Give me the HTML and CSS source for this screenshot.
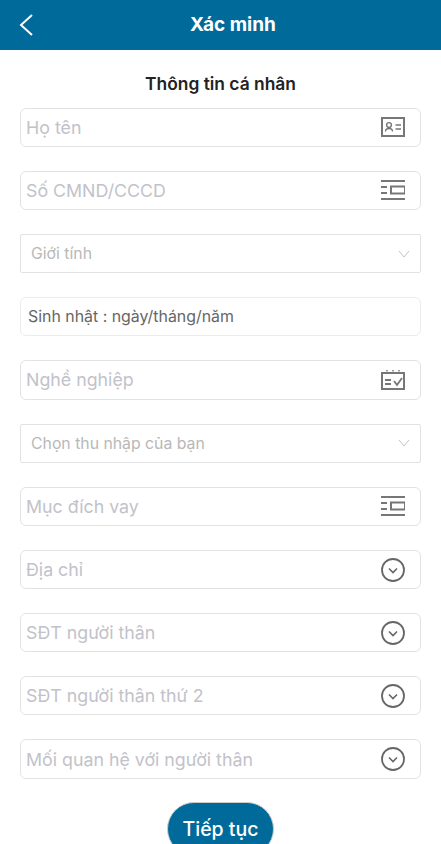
FILE: index.html
```html
<!DOCTYPE html>
<html lang="vi">
<head>
<meta charset="UTF-8">
<meta name="viewport" content="width=device-width, initial-scale=1.0">
<title>Xác minh</title>
<link rel="stylesheet" href="styles.css">
</head>
<body>
<div class="header">
    <a class="back" href="#">
        <svg width="16" height="24" viewBox="0 0 16 24"><path d="M14 2 L3 12 L14 22" fill="none" stroke="#fff" stroke-width="2"/></svg>
    </a>
    <h1>Xác minh</h1>
</div>
<form class="container">
    <h2>Thông tin cá nhân</h2>

    <div class="field">
        <input type="text" placeholder="Họ tên">
        <svg class="icon" width="24" height="20" viewBox="0 0 24 20">
            <rect x="1" y="1" width="22" height="18" fill="none" stroke="#777" stroke-width="2"/>
            <circle cx="8" cy="8" r="2.4" fill="none" stroke="#777" stroke-width="1.4"/>
            <path d="M4.5 14.5 C4.5 10.5 11.5 10.5 11.5 14.5 M14.5 8 H20 M14.5 12 H20" fill="none" stroke="#777" stroke-width="1.4"/>
        </svg>
    </div>

    <div class="field">
        <input type="text" placeholder="Số CMND/CCCD">
        <svg class="icon" width="24" height="20" viewBox="0 0 24 20">
            <path d="M0 1 H24 M0 19 H24 M0 7 H6 M0 13 H6" fill="none" stroke="#777" stroke-width="2"/>
            <rect x="10" y="6.5" width="14" height="7" fill="none" stroke="#777" stroke-width="2"/>
        </svg>
    </div>

    <div class="field picker">
        <span>Giới tính</span>
        <svg class="arrow" width="12" height="8" viewBox="0 0 12 8"><path d="M1 1 L6 7 L11 1" fill="none" stroke="#c4c4c4"/></svg>
    </div>

    <div class="field birthday">
        <span>Sinh nhật : ngày/tháng/năm</span>
    </div>

    <div class="field">
        <input type="text" placeholder="Nghề nghiệp">
        <svg class="icon" width="24" height="20" viewBox="0 0 24 20">
            <path d="M1 3 H23 V19 H1 Z" fill="none" stroke="#777" stroke-width="2"/>
            <path d="M6 0 V5 M12 0 V5 M18 0 V5" fill="none" stroke="#777" stroke-width="1.4" stroke-dasharray="1.5 1"/>
            <path d="M4 10 H10 M4 14 H10 M13 11 L16 15 L21 8" fill="none" stroke="#777" stroke-width="1.8"/>
        </svg>
    </div>

    <div class="field picker">
        <span>Chọn thu nhập của bạn</span>
        <svg class="arrow" width="12" height="8" viewBox="0 0 12 8"><path d="M1 1 L6 7 L11 1" fill="none" stroke="#c4c4c4"/></svg>
    </div>

    <div class="field">
        <input type="text" placeholder="Mục đích vay">
        <svg class="icon" width="24" height="20" viewBox="0 0 24 20">
            <path d="M0 1 H24 M0 19 H24 M0 7 H6 M0 13 H6" fill="none" stroke="#777" stroke-width="2"/>
            <rect x="10" y="6.5" width="14" height="7" fill="none" stroke="#777" stroke-width="2"/>
        </svg>
    </div>

    <div class="field">
        <input type="text" placeholder="Địa chỉ">
        <svg class="icon" width="24" height="24" viewBox="0 0 24 24">
            <circle cx="12" cy="12" r="11" fill="none" stroke="#666" stroke-width="1.8"/>
            <path d="M8 10.5 L12 14.5 L16 10.5" fill="none" stroke="#666" stroke-width="1.6"/>
        </svg>
    </div>

    <div class="field">
        <input type="text" placeholder="SĐT người thân">
        <svg class="icon" width="24" height="24" viewBox="0 0 24 24">
            <circle cx="12" cy="12" r="11" fill="none" stroke="#666" stroke-width="1.8"/>
            <path d="M8 10.5 L12 14.5 L16 10.5" fill="none" stroke="#666" stroke-width="1.6"/>
        </svg>
    </div>

    <div class="field">
        <input type="text" placeholder="SĐT người thân thứ 2">
        <svg class="icon" width="24" height="24" viewBox="0 0 24 24">
            <circle cx="12" cy="12" r="11" fill="none" stroke="#666" stroke-width="1.8"/>
            <path d="M8 10.5 L12 14.5 L16 10.5" fill="none" stroke="#666" stroke-width="1.6"/>
        </svg>
    </div>

    <div class="field">
        <input type="text" placeholder="Mối quan hệ với người thân">
        <svg class="icon" width="24" height="24" viewBox="0 0 24 24">
            <circle cx="12" cy="12" r="11" fill="none" stroke="#666" stroke-width="1.8"/>
            <path d="M8 10.5 L12 14.5 L16 10.5" fill="none" stroke="#666" stroke-width="1.6"/>
        </svg>
    </div>

    <div class="actions">
        <button type="button" class="next">Tiếp tục</button>
    </div>
</form>
</body>
</html>
```

FILE: styles.css
```css
html, body {
    height: 100%;
    overflow: hidden;
}
body {
    margin: 0;
    background-color: white;
    color: #222;
    font-family: Inter, "Noto Sans", sans-serif;
}
.header {
    position: relative;
    display: flex;
    justify-content: center;
    align-items: center;
    box-sizing: border-box;
    height: 50px;
    padding: 0 0 2px 25px;
    background-color: #006a9b;
}
.header h1 {
    margin: 0;
    color: white;
    font-size: 19px;
    font-weight: 700;
}
.back {
    position: absolute;
    left: 18px;
    top: 13px;
    display: block;
    height: 24px;
}
.container {
    display: flex;
    flex-direction: column;
    gap: 24px;
    padding: 0 20px;
}
.container h2 {
    margin: 24px 0 -10.4px;
    height: 20px;
    line-height: 20px;
    text-align: center;
    font-size: 17.4px;
    font-weight: 600;
}
.field {
    display: flex;
    align-items: center;
    box-sizing: border-box;
    height: 39.2px;
    padding: 0 15px 0 5px;
    border: 1px solid #e2e2e2;
    border-radius: 6px;
}
.field input {
    flex: 1;
    min-width: 0;
    padding: 0;
    border: none;
    outline: none;
    font-family: inherit;
    font-size: 17.8px;
    color: #222;
}
.field input::placeholder {
    color: #c2c2ca;
}
.icon {
    flex: none;
}
.picker {
    justify-content: space-between;
    padding: 0 10px 0 10px;
    border-radius: 2px;
    font-size: 15.8px;
    color: #b8b8b8;
}
.birthday {
    padding-left: 7px;
    border-color: #ececec;
    font-size: 15.9px;
    color: #666;
}
.actions {
    display: flex;
    justify-content: center;
    margin-top: -1px;
}
.next {
    width: 107px;
    height: 54px;
    padding: 0;
    border: 1px solid #ccc;
    border-radius: 27px;
    background-color: #006a9b;
    color: white;
    font-family: inherit;
    font-size: 19.5px;
    font-weight: 500;
}
```
